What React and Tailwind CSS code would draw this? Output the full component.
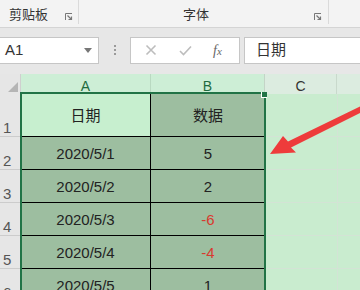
import React from 'react'

const font = { fontFamily: '"Liberation Sans", "Noto Sans CJK SC", sans-serif' }

const rows = [
  { n: '1', a: '日期', b: '数据', head: true },
  { n: '2', a: '2020/5/1', b: '5' },
  { n: '3', a: '2020/5/2', b: '2' },
  { n: '4', a: '2020/5/3', b: '-6', red: true },
  { n: '5', a: '2020/5/4', b: '-4', red: true },
  { n: '6', a: '2020/5/5', b: '1' },
]

function Launcher() {
  return (
    <svg width="8" height="8" viewBox="0 0 8 8" className="text-[#777]">
      <path d="M0.5 7V0.5H7" fill="none" stroke="currentColor" strokeWidth="1" />
      <path d="M2.5 2.5L6.5 6.5M3.5 6.5H6.5V3.5" fill="none" stroke="currentColor" strokeWidth="1.2" />
    </svg>
  )
}

export default function App() {
  return (
    <div className="relative w-[360px] h-[290px] overflow-hidden bg-[#c9eccf] text-[#222]" style={font}>
      {/* ribbon */}
      <div className="flex h-[28px] bg-[#f3f3f3] border-b border-[#d4d4d4]">
        <div className="w-[79px] flex items-end pb-[3px] pl-[9px] pr-[5px] border-r border-[#dadada] mb-[3px]">
          <span className="text-[13px] leading-none flex-1 text-[#333]">剪贴板</span>
          <Launcher />
        </div>
        <div className="w-[250px] flex items-end pb-[3px] pl-[104px] pr-[6px] border-r border-[#dadada] mb-[3px]">
          <span className="text-[13px] leading-none flex-1 text-[#333]">字体</span>
          <Launcher />
        </div>
      </div>

      {/* formula bar */}
      <div className="flex items-center h-[46px] bg-[#e7e7e7] pb-[2px]">
        <div className="w-[99px] h-[27px] bg-white border border-[#c6c6c6] border-l-0 flex items-center pl-[5px] pr-[6px]">
          <span className="text-[15px] flex-1 text-[#333]">A1</span>
          <svg width="8" height="5" viewBox="0 0 8 5"><path d="M0 0H8L4 5Z" fill="#777" /></svg>
        </div>
        <div className="w-[31px] flex flex-col items-center gap-[2px]">
          <span className="w-[2px] h-[2px] bg-[#9a9a9a]" />
          <span className="w-[2px] h-[2px] bg-[#9a9a9a]" />
          <span className="w-[2px] h-[2px] bg-[#9a9a9a]" />
        </div>
        <div className="w-[110px] h-[27px] bg-white border border-[#c6c6c6] flex items-center">
          <svg width="12" height="12" viewBox="0 0 12 12" className="ml-[14px]">
            <path d="M1.5 1.5L10.5 10.5M10.5 1.5L1.5 10.5" stroke="#bdbdbd" strokeWidth="1.6" />
          </svg>
          <svg width="13" height="11" viewBox="0 0 13 11" className="ml-[22px]">
            <path d="M1 6L4.5 9.5L12 1.5" fill="none" stroke="#bdbdbd" strokeWidth="1.6" />
          </svg>
          <span className="ml-[21px] text-[14px] italic text-[#666]" style={{ fontFamily: '"Liberation Serif", serif' }}>f<span className="text-[11px]">x</span></span>
        </div>
        <div className="ml-[4px] flex-1 h-[27px] bg-white border border-[#c6c6c6] border-r-0 flex items-center pl-[11px]">
          <span className="text-[15px] text-[#333]">日期</span>
        </div>
      </div>

      {/* column headers */}
      <div className="flex h-[20px]">
        <div className="w-[21px] bg-[#e6e6e6] border-r border-[#cfcfcf] flex items-end justify-end p-[2px]">
          <svg width="10" height="10" viewBox="0 0 10 10"><path d="M10 0V10H0Z" fill="#b5b5b5" /></svg>
        </div>
        <div className="w-[130px] bg-[#cdeed6] border-r border-[#b9d9c1] flex items-end justify-center pb-[1px] text-[14px] text-[#1f6b3f] leading-none">A</div>
        <div className="w-[114px] bg-[#cdeed6] border-r border-[#c4d4c7] flex items-end justify-center pb-[1px] text-[14px] text-[#1f6b3f] leading-none">B</div>
        <div className="w-[72px] bg-[#dcece0] border-r border-[#c9d9cc] flex items-end justify-center pb-[1px] text-[14px] text-[#333] leading-none">C</div>
        <div className="flex-1 bg-[#dcece0]" />
      </div>

      {/* rows */}
      {rows.map((r) => (
        <div key={r.n} className={`flex ${r.head ? 'h-[43px]' : 'h-[33px]'}`}>
          <div className="w-[21px] bg-[#e6e6e6] border-b border-[#cccccc] flex items-end pl-[3px] pb-[1px] text-[15px] leading-none text-[#555]">
            {r.n}
          </div>
          <div className={`w-[130px] border-b border-r border-black flex items-center justify-center text-[15px] pt-[2px] ${r.head ? 'bg-[#c7efcf]' : 'bg-[#9dbea0]'}`}>
            {r.a}
          </div>
          <div className={`w-[114px] bg-[#9dbea0] border-b border-black flex items-center justify-center text-[15px] pt-[2px] ${r.red ? 'text-[#d93a2f]' : ''}`}>
            {r.b}
          </div>
          <div className="w-[72px] ml-[1px] border-b border-r border-[#d3e3d5]" />
          <div className="flex-1 border-b border-[#d3e3d5]" />
        </div>
      ))}

      {/* selection */}
      <div className="absolute left-[20px] top-[92px] w-[246px] h-[220px] border-[2px] border-[#217346]" />
      <div className="absolute left-[261px] top-[92px] w-[6px] h-[6px] bg-[#217346] border-l border-b border-white" />

      {/* arrow */}
      <svg className="absolute inset-0" width="360" height="290" viewBox="0 0 360 290">
        <polygon points="270,154 283,136 288,141.5 361,106 361,112.5 291,147.5 296,152.5" fill="#ee3b3b" />
      </svg>
    </div>
  )
}
